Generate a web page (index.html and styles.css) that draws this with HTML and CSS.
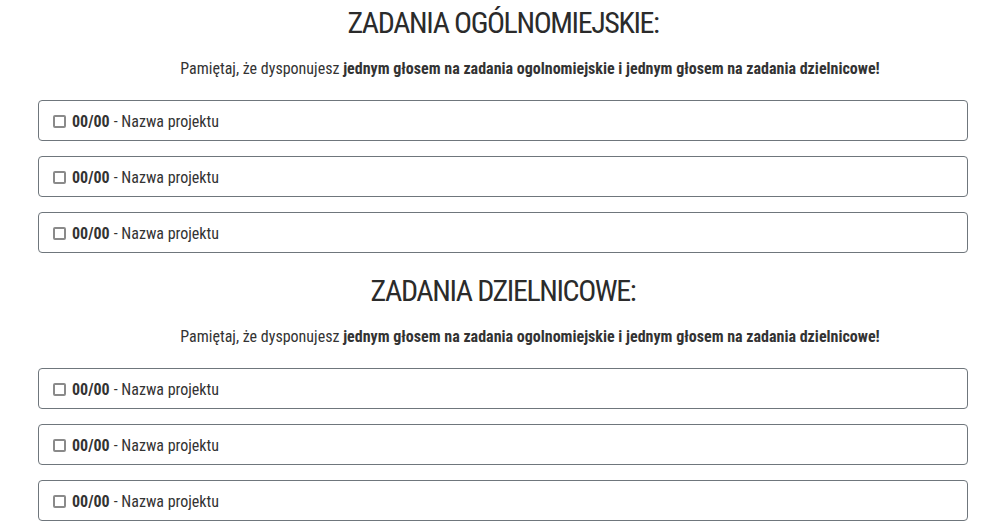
FILE: index.html
```html
<!DOCTYPE html>
<html lang="pl">

<head>
    <meta charset="UTF-8">
    <meta name="viewport" content="width=device-width, initial-scale=1.0">
    <title>Zadania</title>
    <link rel="stylesheet" href="styles.css">
</head>

<body>
    <div class="voting">
        <section class="group">
            <h2 class="group-title">ZADANIA OGÓLNOMIEJSKIE:</h2>
            <p class="notice">Pamiętaj, że dysponujesz <b>jednym głosem na zadania ogolnomiejskie i jednym głosem na zadania dzielnicowe!</b></p>
            <label class="project"><input type="checkbox"> <b>00/00</b> - Nazwa projektu</label>
            <label class="project"><input type="checkbox"> <b>00/00</b> - Nazwa projektu</label>
            <label class="project"><input type="checkbox"> <b>00/00</b> - Nazwa projektu</label>
        </section>

        <section class="group">
            <h2 class="group-title">ZADANIA DZIELNICOWE:</h2>
            <p class="notice">Pamiętaj, że dysponujesz <b>jednym głosem na zadania ogolnomiejskie i jednym głosem na zadania dzielnicowe!</b></p>
            <label class="project"><input type="checkbox"> <b>00/00</b> - Nazwa projektu</label>
            <label class="project"><input type="checkbox"> <b>00/00</b> - Nazwa projektu</label>
            <label class="project"><input type="checkbox"> <b>00/00</b> - Nazwa projektu</label>
        </section>
    </div>
</body>

</html>
```

FILE: styles.css
```css
body {
    margin: 0;
    font-family: "Roboto Condensed", "Liberation Sans Narrow", Roboto, sans-serif;
    color: #333;
}

.voting {
    width: 930px;
    margin-left: 38px;
}

.group {
    padding-top: 5px;
}

.group-title {
    margin: 0;
    font-size: 30px;
    font-weight: 400;
    line-height: 36px;
    letter-spacing: -1.4px;
    text-align: center;
    color: #2b2b2b;
}

.notice {
    margin: 18px 0 21px;
    padding-left: 54px;
    font-size: 16px;
    line-height: 20px;
    text-align: center;
}

.project {
    display: flex;
    align-items: center;
    gap: 4px;
    height: 38px;
    margin-bottom: 15px;
    padding: 1px 14px 0;
    border: 1px solid #6f767c;
    border-radius: 4px;
    font-size: 16px;
    cursor: pointer;
}

.project input {
    appearance: none;
    width: 13px;
    height: 13px;
    margin: 0 2px 0 0;
    border: 2px solid #8a8a8a;
    border-radius: 2px;
    background: #fff;
}
```
